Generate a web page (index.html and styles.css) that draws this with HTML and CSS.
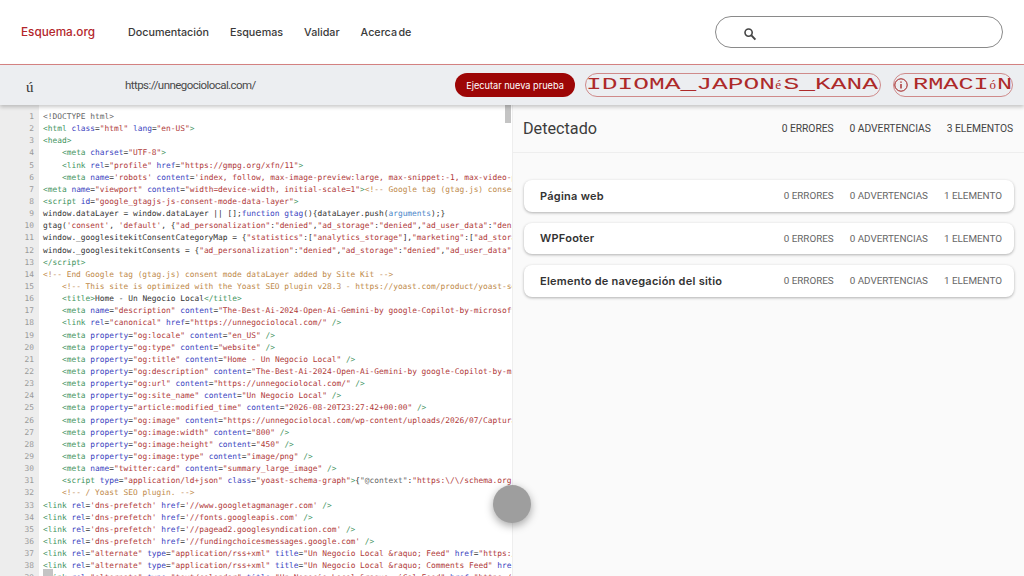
FILE: index.html
```html
<!DOCTYPE html>
<html lang="es">
<head>
<meta charset="utf-8">
<title>Esquema.org</title>
<link rel="stylesheet" href="styles.css">
</head>
<body>
<header class="topbar">
  <a class="brand">Esquema.org</a>
  <nav class="nav"><a>Documentación</a><a>Esquemas</a><a>Validar</a><a>Acerca de</a></nav>
  <div class="search">
    <svg class="search-icon" width="14" height="14" viewBox="0 0 14 14"><circle cx="5.6" cy="5.6" r="3.6" fill="none" stroke="#444" stroke-width="1.6"/><path d="M8.4 8.4L12.4 12.6" stroke="#444" stroke-width="2" fill="none"/></svg>
  </div>
</header>
<section class="toolbar">
  <span class="back">ú</span>
  <span class="url">https://unnegociolocal.com/</span>
  <button class="run">Ejecutar nueva prueba</button>
  <span class="chip chip-lang"><span class="wide">IDIOMA_JAPON<i class="ser">é</i>S_KANA</span></span>
  <span class="chip chip-info"><svg class="info" width="14" height="14" viewBox="0 0 14 14"><circle cx="7" cy="7" r="6.2" fill="none" stroke="#a01818" stroke-width="1"/><path d="M7 6v4.4M7 3.4v1.3" stroke="#a01818" stroke-width="1.3" fill="none"/></svg><span class="wide wide-info">RMACI<i class="ser">ó</i>N</span></span>
</section>
<main class="split">
  <div class="code">
    <div class="gutter"><pre>1
2
3
4
5
6
7
8
9
10
11
12
13
14
15
16
17
18
19
20
21
22
23
24
25
26
27
28
29
30
31
32
33
34
35
36
37
38
39</pre></div>
    <pre class="src"><span class="d">&lt;!DOCTYPE html&gt;</span>
<b>&lt;html</b> <u>class</u>=<s>"html"</s> <u>lang</u>=<s>"en-US"</s><b>&gt;</b>
<b>&lt;head&gt;</b>
    <b>&lt;meta</b> <u>charset</u>=<s>"UTF-8"</s><b>&gt;</b>
    <b>&lt;link</b> <u>rel</u>=<s>"profile"</s> <u>href</u>=<s>"https://gmpg.org/xfn/11"</s><b>&gt;</b>
    <b>&lt;meta</b> <u>name</u>=<s>'robots'</s> <u>content</u>=<s>'index, follow, max-image-preview:large, max-snippet:-1, max-video-preview:-1'</s> <b>/&gt;</b>
<b>&lt;meta</b> <u>name</u>=<s>"viewport"</s> <u>content</u>=<s>"width=device-width, initial-scale=1"</s><b>&gt;</b><em>&lt;!-- Google tag (gtag.js) consent mode dataLayer added by Site Kit --&gt;</em>
<b>&lt;script</b> <u>id</u>=<s>"google_gtagjs-js-consent-mode-data-layer"</s><b>&gt;</b>
window.dataLayer = window.dataLayer || [];<u>function</u> <u>gtag</u>(){dataLayer.push(<u class="k">arguments</u>);}
gtag(<s>'consent'</s>, <s>'default'</s>, {<s>"ad_personalization"</s>:<s>"denied"</s>,<s>"ad_storage"</s>:<s>"denied"</s>,<s>"ad_user_data"</s>:<s>"denied"</s>});
window._googlesitekitConsentCategoryMap = {<s>"statistics"</s>:[<s>"analytics_storage"</s>],<s>"marketing"</s>:[<s>"ad_storage"</s>,<s>"ad_user_data"</s>]};
window._googlesitekitConsents = {<s>"ad_personalization"</s>:<s>"denied"</s>,<s>"ad_storage"</s>:<s>"denied"</s>,<s>"ad_user_data"</s>:<s>"denied"</s>};
<b>&lt;/script&gt;</b>
<em>&lt;!-- End Google tag (gtag.js) consent mode dataLayer added by Site Kit --&gt;</em>
    <em>&lt;!-- This site is optimized with the Yoast SEO plugin v28.3 - https://yoast.com/product/yoast-seo-wordpress/ --&gt;</em>
    <b>&lt;title&gt;</b>Home - Un Negocio Local<b>&lt;/title&gt;</b>
    <b>&lt;meta</b> <u>name</u>=<s>"description"</s> <u>content</u>=<s>"The-Best-Ai-2024-Open-Ai-Gemini-by google-Copilot-by-microsoft-Claude"</s> <b>/&gt;</b>
    <b>&lt;link</b> <u>rel</u>=<s>"canonical"</s> <u>href</u>=<s>"https://unnegociolocal.com/"</s> <b>/&gt;</b>
    <b>&lt;meta</b> <u>property</u>=<s>"og:locale"</s> <u>content</u>=<s>"en_US"</s> <b>/&gt;</b>
    <b>&lt;meta</b> <u>property</u>=<s>"og:type"</s> <u>content</u>=<s>"website"</s> <b>/&gt;</b>
    <b>&lt;meta</b> <u>property</u>=<s>"og:title"</s> <u>content</u>=<s>"Home - Un Negocio Local"</s> <b>/&gt;</b>
    <b>&lt;meta</b> <u>property</u>=<s>"og:description"</s> <u>content</u>=<s>"The-Best-Ai-2024-Open-Ai-Gemini-by google-Copilot-by-microsoft"</s> <b>/&gt;</b>
    <b>&lt;meta</b> <u>property</u>=<s>"og:url"</s> <u>content</u>=<s>"https://unnegociolocal.com/"</s> <b>/&gt;</b>
    <b>&lt;meta</b> <u>property</u>=<s>"og:site_name"</s> <u>content</u>=<s>"Un Negocio Local"</s> <b>/&gt;</b>
    <b>&lt;meta</b> <u>property</u>=<s>"article:modified_time"</s> <u>content</u>=<s>"2026-08-20T23:27:42+00:00"</s> <b>/&gt;</b>
    <b>&lt;meta</b> <u>property</u>=<s>"og:image"</s> <u>content</u>=<s>"https://unnegociolocal.com/wp-content/uploads/2026/07/Captura.png"</s> <b>/&gt;</b>
    <b>&lt;meta</b> <u>property</u>=<s>"og:image:width"</s> <u>content</u>=<s>"800"</s> <b>/&gt;</b>
    <b>&lt;meta</b> <u>property</u>=<s>"og:image:height"</s> <u>content</u>=<s>"450"</s> <b>/&gt;</b>
    <b>&lt;meta</b> <u>property</u>=<s>"og:image:type"</s> <u>content</u>=<s>"image/png"</s> <b>/&gt;</b>
    <b>&lt;meta</b> <u>name</u>=<s>"twitter:card"</s> <u>content</u>=<s>"summary_large_image"</s> <b>/&gt;</b>
    <b>&lt;script</b> <u>type</u>=<s>"application/ld+json"</s> <u>class</u>=<s>"yoast-schema-graph"</s><b>&gt;</b>{<span class="d">"@context"</span>:<s>"https:\/\/schema.org"</s>}
    <em>&lt;!-- / Yoast SEO plugin. --&gt;</em>
<b>&lt;link</b> <u>rel</u>=<s>'dns-prefetch'</s> <u>href</u>=<s>'//www.googletagmanager.com'</s> <b>/&gt;</b>
<b>&lt;link</b> <u>rel</u>=<s>'dns-prefetch'</s> <u>href</u>=<s>'//fonts.googleapis.com'</s> <b>/&gt;</b>
<b>&lt;link</b> <u>rel</u>=<s>'dns-prefetch'</s> <u>href</u>=<s>'//pagead2.googlesyndication.com'</s> <b>/&gt;</b>
<b>&lt;link</b> <u>rel</u>=<s>'dns-prefetch'</s> <u>href</u>=<s>'//fundingchoicesmessages.google.com'</s> <b>/&gt;</b>
<b>&lt;link</b> <u>rel</u>=<s>"alternate"</s> <u>type</u>=<s>"application/rss+xml"</s> <u>title</u>=<s>"Un Negocio Local &amp;raquo; Feed"</s> <u>href</u>=<s>"https://unnegociolocal.com/feed/"</s> <b>/&gt;</b>
<b>&lt;link</b> <u>rel</u>=<s>"alternate"</s> <u>type</u>=<s>"application/rss+xml"</s> <u>title</u>=<s>"Un Negocio Local &amp;raquo; Comments Feed"</s> <u>href</u>=<s>"https://unnegociolocal.com/comments/feed/"</s> <b>/&gt;</b>
<b>&lt;link</b> <u>rel</u>=<s>"alternate"</s> <u>type</u>=<s>"text/calendar"</s> <u>title</u>=<s>"Un Negocio Local &amp;raquo; iCal Feed"</s> <u>href</u>=<s>"https://unnegociolocal.com/"</s> <b>/&gt;</b></pre>
    <div class="vthumb"></div>
    <div class="hthumb"></div>
  </div>
  <aside class="results">
    <div class="results-head">
      <h2>Detectado</h2>
      <div class="totals"><span>0 ERRORES</span><span>0 ADVERTENCIAS</span><span>3 ELEMENTOS</span></div>
    </div>
    <div class="cards">
      <div class="card"><strong>Página web</strong><div class="counts"><span>0 ERRORES</span><span>0 ADVERTENCIAS</span><span>1 ELEMENTO</span></div></div>
      <div class="card"><strong>WPFooter</strong><div class="counts"><span>0 ERRORES</span><span>0 ADVERTENCIAS</span><span>1 ELEMENTO</span></div></div>
      <div class="card"><strong>Elemento de navegación del sitio</strong><div class="counts"><span>0 ERRORES</span><span>0 ADVERTENCIAS</span><span>1 ELEMENTO</span></div></div>
    </div>
  </aside>
  <div class="handle"></div>
</main>
</body>
</html>
```
FILE: styles.css
```css
* { box-sizing: border-box; }
html, body { margin: 0; height: 100%; overflow: hidden; background: #fff; }
body { display: flex; flex-direction: column; font-family: Inter, "Noto Sans", sans-serif; color: #333; }

.topbar { height: 65px; flex: none; display: flex; align-items: center; padding: 0 21px; background: #fff; border-bottom: 1px solid #d98585; }
.brand { width: 107px; font-size: 11.75px; font-weight: 500; color: #b3262b; }
.nav { display: flex; gap: 21px; font-size: 10.75px; font-weight: 500; color: #3a3a3a; word-spacing: -1.5px; }
.search { margin-left: auto; width: 288px; height: 32px; border: 1px solid #8a8a8a; border-radius: 16px; display: flex; align-items: center; padding-left: 27px; }
.search-icon { margin-top: 4px; }

.toolbar { height: 40px; flex: none; display: flex; align-items: center; background: #eceef1; box-shadow: 0 2px 4px rgba(0,0,0,.22); position: relative; z-index: 2; padding-left: 26px; }
.back { width: 99px; font: 15px "Liberation Serif", serif; color: #333; padding-top: 4px; }
.url { width: 330px; font: 400 11.5px Roboto, sans-serif; letter-spacing: -.55px; color: #4a4a4a; }
.run { width: 120px; height: 24px; margin-right: 10px; border: 0; border-radius: 12px; background: #9d0606; color: #fff; font: 400 9.2px Inter, sans-serif; padding: 0; }
.chip { height: 24px; border: 1px solid #cf8a8a; border-radius: 12px; display: flex; align-items: center; color: #ad2a2a; }
.chip-lang { width: 296px; margin-right: 12px; }
.chip-info { width: 120px; }
.info { flex: none; margin-right: 5px; }
.wide { display: inline-block; font: 400 16.5px/22px "Liberation Mono", monospace; white-space: nowrap; transform-origin: 0 50%; transform: scaleX(1.59); }
.wide-info { transform: scaleX(1.53); }
.ser { display: inline-block; width: 5.4px; font: normal 12px/22px "Liberation Serif", serif; transform-origin: 0 50%; transform: scaleX(.7); }

.split { flex: 1; min-height: 0; display: flex; position: relative; }
.code { width: 512px; flex: none; display: flex; overflow: hidden; position: relative; background: #fff; }
.gutter { width: 39px; flex: none; background: #ededed; }
.gutter pre { margin: 0; padding: 6px 5px 0 0; text-align: right; font: 7.87px/12.14px "DejaVu Sans Mono", monospace; color: #9a9a9a; }
.src { margin: 0; padding: 6px 0 0 4px; font: 7.87px/12.14px "DejaVu Sans Mono", monospace; color: #333; }
.src b { font-weight: 400; color: #3f9460; }
.src u { text-decoration: none; color: #3a3fc0; }
.src u.k { color: #4a86c8; }
.src s { text-decoration: none; color: #b03a3a; }
.src em { font-style: normal; color: #c08a4a; }
.src .d { color: #666; }
.vthumb { position: absolute; right: 1px; top: 0; width: 6px; height: 18px; background: #c4c4c4; }
.hthumb { position: absolute; left: 43px; bottom: 0; width: 10px; height: 7px; background: #c4c4c4; }

.results { flex: 1; background: #fafafa; border-left: 1px solid #eee; }
.results-head { height: 48px; display: flex; align-items: center; justify-content: space-between; padding: 0 11px 0 10px; border-bottom: 1px solid #eeeeee; }
.results-head h2 { margin: 0; font: 400 16.2px Roboto, sans-serif; color: #3c3c3c; }
.totals { display: flex; gap: 16px; font: 400 10.3px Roboto, sans-serif; letter-spacing: -.05px; color: #444; }
.cards { display: flex; flex-direction: column; gap: 11px; padding: 27px 10px 0 11px; }
.card { height: 31.5px; background: #fff; border-radius: 8px; box-shadow: 0 1px 3px rgba(0,0,0,.3); display: flex; align-items: center; justify-content: space-between; padding: 0 12px 0 16px; }
.card strong { font: 600 11px/14px Inter, sans-serif; letter-spacing: .25px; color: #333; }
.counts { display: flex; gap: 16px; font: 400 9.85px Roboto, sans-serif; color: #666; }

.handle { position: absolute; left: 493px; top: 380px; width: 38px; height: 38px; border-radius: 50%; background: #9e9e9e; box-shadow: 0 3px 8px rgba(0,0,0,.35); z-index: 3; }
```
